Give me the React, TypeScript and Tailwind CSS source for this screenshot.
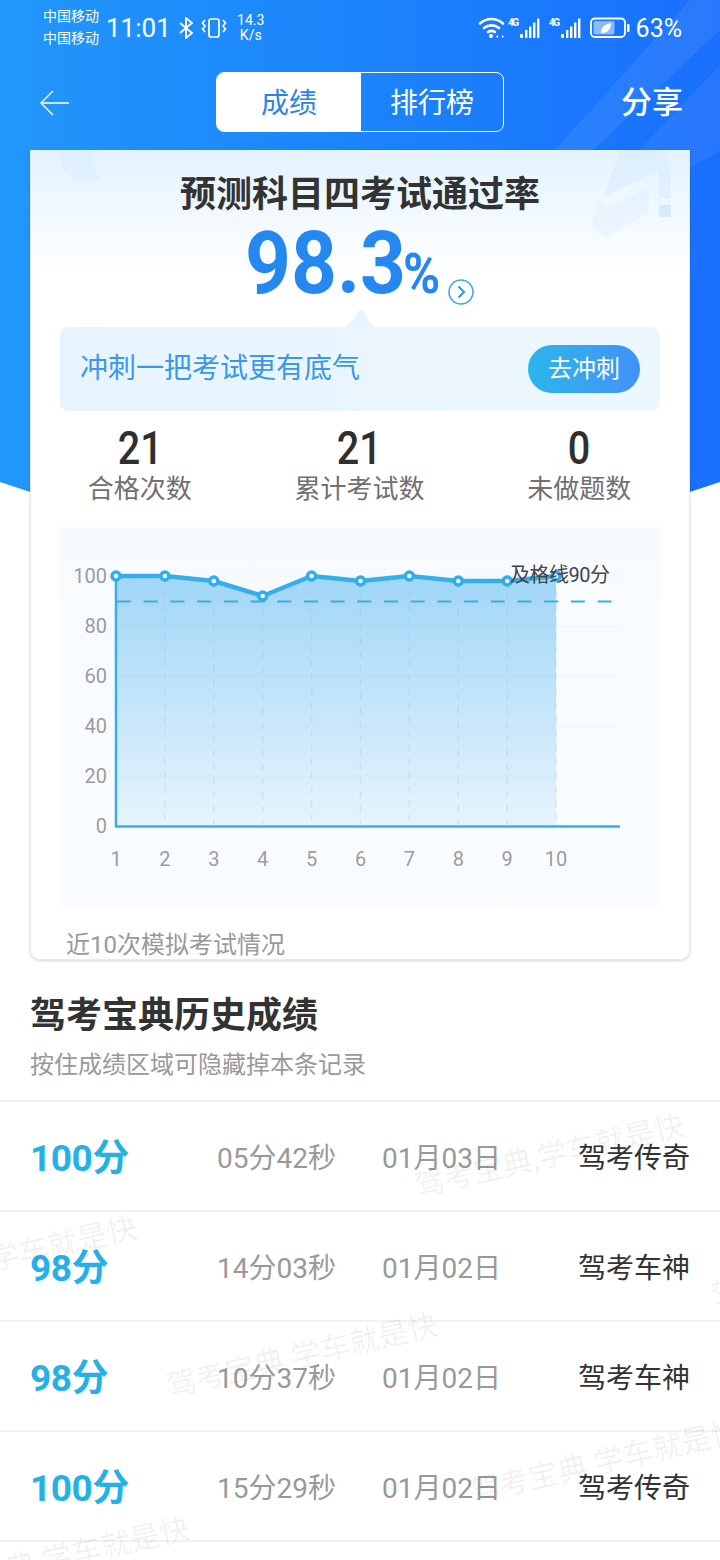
import React from "react";

const cjk = "font-['Roboto','Noto_Sans_CJK_SC',sans-serif]";

const points = [100, 100, 98, 92, 100, 98, 100, 98, 98, 100];
const px = (i: number) => 56 + i * 48.9;
const py = (v: number) => 299 - v * 2.5;

function Signal() {
  return (
    <svg width="34" height="24" viewBox="0 0 34 24" className="block">
      <text x="0" y="10" fontSize="10" fontWeight="700" fill="#fff" fontFamily="Roboto" textLength="11">4G</text>
      <rect x="12" y="18" width="3" height="4" rx="1" fill="#fff" />
      <rect x="17" y="14" width="2.400" height="8" fill="#fff" />
      <rect x="21" y="10.500" width="2.400" height="11.500" fill="#fff" />
      <rect x="25" y="6.500" width="2.400" height="15.500" fill="#fff" />
      <rect x="29" y="2.500" width="2.400" height="19.500" fill="#fff" />
    </svg>
  );
}

function StatusBar() {
  return (
    <div className={`h-[56px] flex items-center pl-[43px] pr-[38px] text-white ${cjk}`}>
      <div className="flex flex-col text-[14px] leading-[22px] w-[63px] mt-[-2px]">
        <span>中国移动</span>
        <span>中国移动</span>
      </div>
      <span className="text-[26px] leading-none">11:01</span>
      <svg width="16" height="22" viewBox="0 0 16 22" fill="none" stroke="#fff" strokeWidth="1.800" className="ml-[7px]">
        <path d="M2 6l12 10-6 5V1l6 5L2 16" />
      </svg>
      <svg width="28" height="22" viewBox="0 0 28 22" className="ml-[6px]" fill="none" stroke="#fff" strokeWidth="1.700">
        <rect x="9" y="2" width="10" height="18" rx="2" />
        <path d="M5 3 2.500 6l2.500 3-2.500 3 2.500 3M23 3l2.500 3L23 9l2.500 3-2.500 3" />
      </svg>
      <div className="flex flex-col items-center text-[14px] leading-[15px] ml-[8px] w-[30px] mt-[-1px]">
        <span>14.3</span>
        <span>K/s</span>
      </div>
      <div className="flex-1" />
      <svg width="28" height="24" viewBox="0 0 28 24" fill="none" stroke="#fff" strokeWidth="2.600" strokeLinecap="round">
        <path d="M2 7.500c7-6 16-6 23 0M6 12c4.500-3.500 10.500-3.500 15 0M10 16c2.200-1.500 4.800-1.500 7 0" />
        <circle cx="13" cy="20" r="2" fill="#fff" stroke="none" />
        <path d="m20 19-2 1.500 2 1.500zM24 19l2 1.500-2 1.500z" fill="#fff" stroke="none" />
      </svg>
      <div className="ml-[2px]"><Signal /></div>
      <div className="ml-[7px]"><Signal /></div>
      <svg width="40" height="22" viewBox="0 0 40 22" fill="none" className="ml-[7px]">
        <rect x="1" y="1.500" width="34" height="18.500" rx="4" stroke="#fff" strokeWidth="1.800" />
        <rect x="3.500" y="4" width="21" height="13.500" rx="2" fill="#ffffff" fillOpacity="0.5" />
        <path d="M11 16c0-6 4-9 10-10 0 6-3 10-9 10" fill="#fff" />
        <rect x="37" y="7" width="2.500" height="8" rx="1" fill="#fff" />
      </svg>
      <span className="text-[25px] leading-none ml-[6px]">63%</span>
    </div>
  );
}

function Nav() {
  return (
    <div className={`h-[94px] flex items-center relative px-[38px] ${cjk}`}>
      <svg width="32" height="30" viewBox="0 0 32 30" fill="none" stroke="#fff" strokeWidth="1.400">
        <path d="M31 15H3M15 3 3 15l12 12" />
      </svg>
      <div className="flex h-[60px] w-[288px] ml-[146px] mt-[-2px] rounded-[8px] border border-white overflow-hidden text-[28px]">
        <div className="w-[144px] bg-white text-[#2b84e2] flex items-center justify-center pt-[4px]">成绩</div>
        <div className="flex-1 text-white flex items-center justify-center pt-[4px]">排行榜</div>
      </div>
      <span className="ml-auto mr-[-1px] text-white text-[31px] font-medium">分享</span>
    </div>
  );
}

function Chart() {
  const line = points.map((v, i) => `${px(i)},${py(v)}`).join(" ");
  const area = `56,299 ${line} ${px(9)},299`;
  return (
    <svg width="600" height="381" viewBox="0 0 600 381" className="block">
      <defs>
        <linearGradient id="chartBg" x1="0" y1="0" x2="0" y2="1">
          <stop offset="0" stopColor="#f7fbff" />
          <stop offset="1" stopColor="#f9fcff" />
        </linearGradient>
        <linearGradient id="area" x1="0" y1="0" x2="0" y2="1">
          <stop offset="0" stopColor="#a0d6f7" />
          <stop offset="1" stopColor="#e6f4fd" />
        </linearGradient>
      </defs>
      <rect width="600" height="381" fill="url(#chartBg)" />
      {[49, 99, 149, 199, 249].map((y) => (
        <line key={y} x1="56" x2="560" y1={y} y2={y} stroke="#eff4f7" strokeWidth="1" />
      ))}
      <polygon points={area} fill="url(#area)" />
      {[99, 149, 199, 249].map((y) => (
        <line key={y} x1="56" x2={px(9)} y1={y} y2={y} stroke="#8fb8d0" strokeOpacity="0.12" strokeWidth="1" />
      ))}
      {points.slice(1).map((v, i) => (
        <line key={i} x1={px(i + 1)} x2={px(i + 1)} y1={py(v)} y2="299" stroke="#8fb4c9" strokeOpacity="0.22" strokeDasharray="7 7" strokeWidth="1.500" />
      ))}
      <line x1="57" x2="552" y1="74.500" y2="74.500" stroke="#3dabe6" strokeWidth="2" strokeDasharray="14 12.700" />
      <line x1="56" x2="56" y1="44" y2="300" stroke="#3aaee6" strokeWidth="2.500" />
      <line x1="55" x2="560" y1="299.500" y2="299.500" stroke="#3aaee6" strokeWidth="2.500" />
      <polyline points={line} fill="none" stroke="#35aeea" strokeWidth="4.500" strokeLinejoin="round" />
      {points.map((v, i) => (
        <circle key={i} cx={px(i)} cy={py(v)} r="4" fill="#fff" stroke="#2eaeee" strokeWidth="3.500" />
      ))}
      <g fontFamily="Roboto" fontSize="20" fill="#9c9c9c" textAnchor="end">
        {[100, 80, 60, 40, 20, 0].map((t, i) => (
          <text key={t} x="47" y={56 + i * 50}>{t}</text>
        ))}
      </g>
      <g fontFamily="Roboto" fontSize="20" fill="#9c9c9c" textAnchor="middle">
        {points.map((_, i) => (
          <text key={i} x={px(i)} y="339">{i + 1}</text>
        ))}
      </g>
      <text x="450" y="55" fontSize="20" fill="#444" fontFamily="Roboto, 'Noto Sans CJK SC', sans-serif" textLength="100">及格线90分</text>
    </svg>
  );
}

function Stat({ value, label }: { value: string; label: string }) {
  return (
    <div className="flex flex-col items-center">
      <span className="text-[46px] leading-[44px] font-medium text-[#2f2f2f] scale-x-[0.86]">{value}</span>
      <span className="text-[26px] leading-[36px] text-[#707070] mt-[1px]">{label}</span>
    </div>
  );
}

function Card() {
  return (
    <div className={`relative mx-[30px] h-[810px] rounded-b-[10px] border-x border-b border-[#ebebeb] bg-white shadow-[0_1px_3px_rgba(0,0,0,0.18)] overflow-hidden ${cjk}`}>
      <div className="absolute inset-x-0 top-0 h-[125px] bg-gradient-to-b from-[#e3f3ff] to-white" />
      <svg width="660" height="110" viewBox="0 0 660 110" className="absolute left-0 top-0" fill="none">
        <path d="M28 0c1 20 10 32 26 32 6 0 12-1 16-4-8-8-8-18-6-28z" fill="#d6e9fc" fillOpacity="0.3" />
        <polygon points="590,0 625,0 640,10 640,48 628,48 628,20 572,47" fill="#d5e9fc" fillOpacity="0.45" />
        <polygon points="567,50 577,58 618,37 618,63 575,87 560,77" fill="#dbecfc" fillOpacity="0.35" />
        <rect x="628" y="55" width="12" height="12" fill="#d7e9fb" />
      </svg>
      <div className="relative flex flex-col">
        <div className="text-center text-[36px] leading-[44px] font-bold text-[#333] mt-[23px]">预测科目四考试通过率</div>
        <div className="flex items-end justify-center h-[90px] mt-[-1px]">
          <span className="w-[155px] whitespace-nowrap origin-left scale-x-[0.91] text-[#2488f0] text-[88px] leading-[86px] font-bold font-['Roboto',sans-serif]">98.3</span>
          <span className="w-[38px] origin-left scale-x-[0.9] text-[#2488f0] text-[56px] leading-[64px] font-bold ml-[3px]">%</span>
          <svg width="28" height="28" viewBox="0 0 28 28" fill="none" className="ml-[6px]">
            <circle cx="14" cy="14" r="12" stroke="#3aa6e6" strokeWidth="1.500" />
            <path d="m11.500 8.500 5.500 5.500-5.500 5.500" stroke="#2f9fe4" strokeWidth="2.200" />
          </svg>
        </div>
        <div className="relative mt-[21px] mx-[29px] h-[84px] rounded-[8px] bg-gradient-to-r from-[#e7f4fe] to-[#edf7ff] flex items-center px-[20px]">
          <svg width="46" height="19" viewBox="0 0 46 19" className="absolute left-[277px] top-[-18px]">
            <path d="M0 19c8 0 11-2 14-6l6-9c2-4 5-4 7 0l6 9c3 4 6 6 13 6z" fill="#e9f5fe" />
          </svg>
          <span className="relative text-[28px] text-[#3a97e9]">冲刺一把考试更有底气</span>
          <div className="relative ml-auto w-[112px] h-[48px] rounded-full bg-gradient-to-r from-[#2bb6ea] to-[#4192f6] text-white text-[24px] flex items-center justify-center">去冲刺</div>
        </div>
        <div className="grid grid-cols-3 mt-[15px] ml-[-1px]">
          <Stat value="21" label="合格次数" />
          <Stat value="21" label="累计考试数" />
          <Stat value="0" label="未做题数" />
        </div>
        <div className="mx-[29px] mt-[20px]">
          <Chart />
        </div>
        <div className="text-[24px] leading-[32px] text-[#999] ml-[35px] mt-[21px]">近10次模拟考试情况</div>
      </div>
    </div>
  );
}

const rows = [
  { score: "100分", time: "05分42秒", date: "01月03日", tier: "驾考传奇" },
  { score: "98分", time: "14分03秒", date: "01月02日", tier: "驾考车神" },
  { score: "98分", time: "10分37秒", date: "01月02日", tier: "驾考车神" },
  { score: "100分", time: "15分29秒", date: "01月02日", tier: "驾考传奇" },
];

function History() {
  return (
    <div className={cjk}>
      <div className="px-[30px] pt-[33px] h-[142px] border-b-2 border-[#f2f2f2]">
        <div className="text-[36px] leading-[46px] font-bold text-[#333]">驾考宝典历史成绩</div>
        <div className="text-[24px] leading-[34px] text-[#999] mt-[9px]">按住成绩区域可隐藏掉本条记录</div>
      </div>
      {rows.map((r, i) => (
        <div key={i} className="h-[110px] grid grid-cols-[217px_165px_196px_1fr] items-center border-b-2 border-[#f2f2f2] pt-[6px]">
          <span className="pl-[30px] text-[37px] font-bold text-[#25b1e6] tracking-[-0.500px]">{r.score}</span>
          <span className="text-[28px] text-[#999]">{r.time}</span>
          <span className="text-[28px] text-[#999]">{r.date}</span>
          <span className="text-[28px] text-[#333]">{r.tier}</span>
        </div>
      ))}
    </div>
  );
}

function Watermark({ className, text }: { className: string; text: string }) {
  return (
    <span className={`absolute text-[30px] leading-none whitespace-nowrap text-[#000000]/[0.06] rotate-[-13deg] origin-left ${cjk} ${className}`}>{text}</span>
  );
}

export default function App() {
  return (
    <div className="relative w-[720px] h-[1560px] overflow-hidden bg-white">
      <div className="absolute left-0 top-0 w-full h-[541px] bg-gradient-to-r from-[#2297fb] to-[#1a6ffc] [clip-path:ellipse(110%_100%_at_50%_0%)]">
        <svg width="720" height="200" viewBox="0 0 720 200" className="absolute left-0 top-0">
          <polygon points="690,0 720,0 720,30 540,200 510,200" fill="#ffffff" fillOpacity="0.07" />
          <polygon points="720,65 720,150 640,200 620,170" fill="#ffffff" fillOpacity="0.06" />
        </svg>
      </div>
      <div className="relative">
        <StatusBar />
        <Nav />
        <Card />
        <History />
      </div>
      <Watermark className="left-[415px] top-[1172px]" text="驾考宝典,学车就是快" />
      <Watermark className="left-[-10px] top-[1246px]" text="学车就是快" />
      <Watermark className="left-[167px] top-[1372px]" text="驾考宝典 学车就是快" />
      <Watermark className="left-[470px] top-[1478px]" text="驾考宝典 学车就是快" />
      <Watermark className="left-[-23px] top-[1562px]" text="宝典 学车就是快" />
      <Watermark className="left-[712px] top-[1282px]" text="驾考" />
    </div>
  );
}
